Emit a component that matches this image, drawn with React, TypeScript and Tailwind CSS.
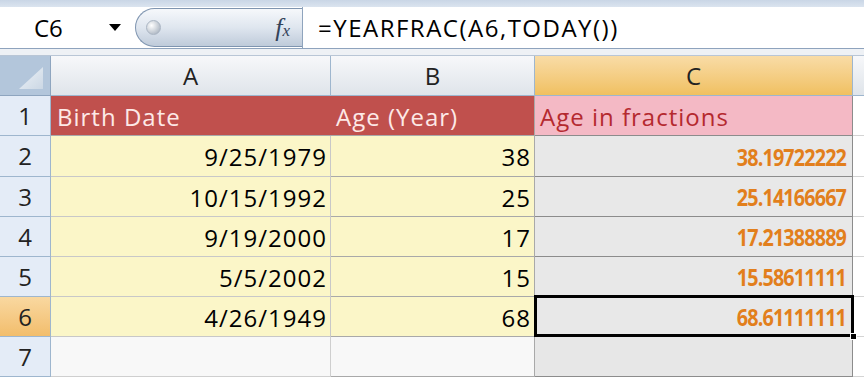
const rows = [
  { n: 2, date: '9/25/1979', age: '38', frac: '38.19722222' },
  { n: 3, date: '10/15/1992', age: '25', frac: '25.14166667' },
  { n: 4, date: '9/19/2000', age: '17', frac: '17.21388889' },
  { n: 5, date: '5/5/2002', age: '15', frac: '15.58611111' },
  { n: 6, date: '4/26/1949', age: '68', frac: '68.61111111' },
]

const font = { fontFamily: '"Open Sans", "Liberation Sans", sans-serif' }

function RowHead({ n, active }: { n: number; active?: boolean }) {
  return (
    <div
      className={`flex items-center justify-center border-r border-b border-[#9eb6ce] text-[24px] text-[#222] ${
        active ? 'bg-gradient-to-b from-[#f9d8a0] to-[#f2bd6b]' : 'bg-[#e4ecf7]'
      }`}
    >
      {n}
    </div>
  )
}

function ColHead({ label, active }: { label: string; active?: boolean }) {
  return (
    <div
      className={`flex items-center justify-center border-r border-b border-[#9eb6ce] text-[24px] text-[#222] ${
        active ? 'bg-gradient-to-b from-[#f9dca6] to-[#f0c060]' : 'bg-gradient-to-b from-[#f7f8fa] to-[#dfe4ea]'
      }`}
    >
      {label}
    </div>
  )
}

export default function App() {
  return (
    <div className="w-[864px] h-[380px] overflow-hidden bg-white" style={font}>
      {/* top strip */}
      <div className="h-[7px] bg-gradient-to-b from-[#c9d6e6] to-[#dbe4ef]" />

      {/* formula bar */}
      <div className="flex h-[42px] border-b border-[#8ea3bd] bg-white">
        <div className="w-[135px] flex items-center pl-[34px] text-[24px] text-black">
          <span>C6</span>
          <span className="ml-auto mr-[14px] w-0 h-0 border-l-[6px] border-r-[6px] border-t-[7px] border-l-transparent border-r-transparent border-t-black" />
        </div>
        <div className="w-[167px] my-[1px] flex items-center rounded-l-full border border-r-0 border-[#7f95b0] bg-gradient-to-b from-[#f6f8fb] via-[#dfe6ef] to-[#bfcbda] pl-[10px] pr-[12px]">
          <span className="w-[15px] h-[15px] rounded-full bg-[radial-gradient(circle_at_35%_35%,#ffffff,#9aa6b5)] border border-[#aab5c3]" />
          <span className="ml-auto text-[26px] leading-none italic text-[#34435a]" style={{ fontFamily: '"Liberation Serif", serif' }}>
            f<span className="text-[17px]">x</span>
          </span>
        </div>
        <div className="flex-1 flex items-center border-l border-[#8fa4bd] pl-[15px] text-[24px] tracking-[1.5px] text-black">
          =YEARFRAC(A6,TODAY())
        </div>
      </div>
      <div className="h-[7px] bg-[#eef1f5] border-b border-[#b9c6d6]" />

      {/* grid */}
      <div className="grid grid-cols-[51px_280px_204px_318px_1fr] grid-rows-[40px_40px_41px_40px_40px_40px_40px_40px]">
        {/* corner */}
        <div className="relative border-r border-b border-[#8ea5bf] bg-[#b3c6db]">
          <svg className="absolute right-[7px] bottom-[6px]" width="24" height="22" viewBox="0 0 24 22">
            <defs>
              <linearGradient id="tri" x1="0" y1="0" x2="1" y2="1">
                <stop offset="0" stopColor="#eef3f8" />
                <stop offset="1" stopColor="#cbd7e4" />
              </linearGradient>
            </defs>
            <polygon points="24,0 24,22 0,22" fill="url(#tri)" />
          </svg>
        </div>
        <ColHead label="A" />
        <ColHead label="B" />
        <ColHead label="C" active />
        <div className="border-b border-[#9eb6ce] bg-gradient-to-b from-[#f7f8fa] to-[#dfe4ea]" />

        {/* row 1 */}
        <RowHead n={1} />
        <div className="flex items-center pl-[6px] pt-[2px] bg-[#c0504d] text-[24px] tracking-[1px] text-[#fde9e7] border-b border-[#a9a9a9]">Birth Date</div>
        <div className="flex items-center pl-[5px] pt-[2px] bg-[#c0504d] text-[24px] tracking-[1px] text-[#fde9e7] border-r border-b border-[#a9a9a9]">Age (Year)</div>
        <div className="flex items-center pl-[5px] pt-[2px] bg-[#f4b9c5] text-[24px] tracking-[1px] text-[#b5292f] border-r border-b border-[#8c8c8c]">Age in fractions</div>
        <div className="border-b border-[#d4d4d4] bg-white" />

        {rows.map((r) => (
          <DataRow key={r.n} {...r} />
        ))}

        {/* row 7 */}
        <RowHead n={7} />
        <div className="bg-[#f8f8f8] border-r border-b border-[#cfcfcf]" />
        <div className="bg-[#f8f8f8] border-r border-b border-[#a9a9a9]" />
        <div className="bg-[#e7e7e7] border-r border-b border-[#8c8c8c]" />
        <div className="border-b border-[#d4d4d4] bg-white" />
      </div>
    </div>
  )
}

function DataRow({ n, date, age, frac }: { n: number; date: string; age: string; frac: string }) {
  const active = n === 6
  return (
    <>
      <RowHead n={n} active={active} />
      <div className="flex items-center justify-end pr-[3px] pt-[2px] bg-[#fbf6c8] text-[24px] tracking-[1px] text-black border-r border-b border-[#c8c8c8]">{date}</div>
      <div className="flex items-center justify-end pr-[3px] pt-[2px] bg-[#fbf6c8] text-[24px] tracking-[1px] text-black border-r border-b border-[#a9a9a9]">{age}</div>
      <div className="relative flex items-center justify-end pr-[6px] pt-[2px] bg-[#e8e8e8] border-r border-b border-[#8c8c8c]">
        <span className="inline-block origin-right scale-x-[0.86] text-[23px] tracking-[-1px] font-bold text-[#e27f1c]">{frac}</span>
        {active && (
          <>
            <div className="absolute -left-[1px] -top-[2px] -right-[2px] -bottom-[1px] border-[3px] border-black" />
            <div className="absolute -right-[5px] -bottom-[4px] w-[7px] h-[7px] bg-black border border-white" />
          </>
        )}
      </div>
      <div className="border-b border-[#d4d4d4] bg-white" />
    </>
  )
}
